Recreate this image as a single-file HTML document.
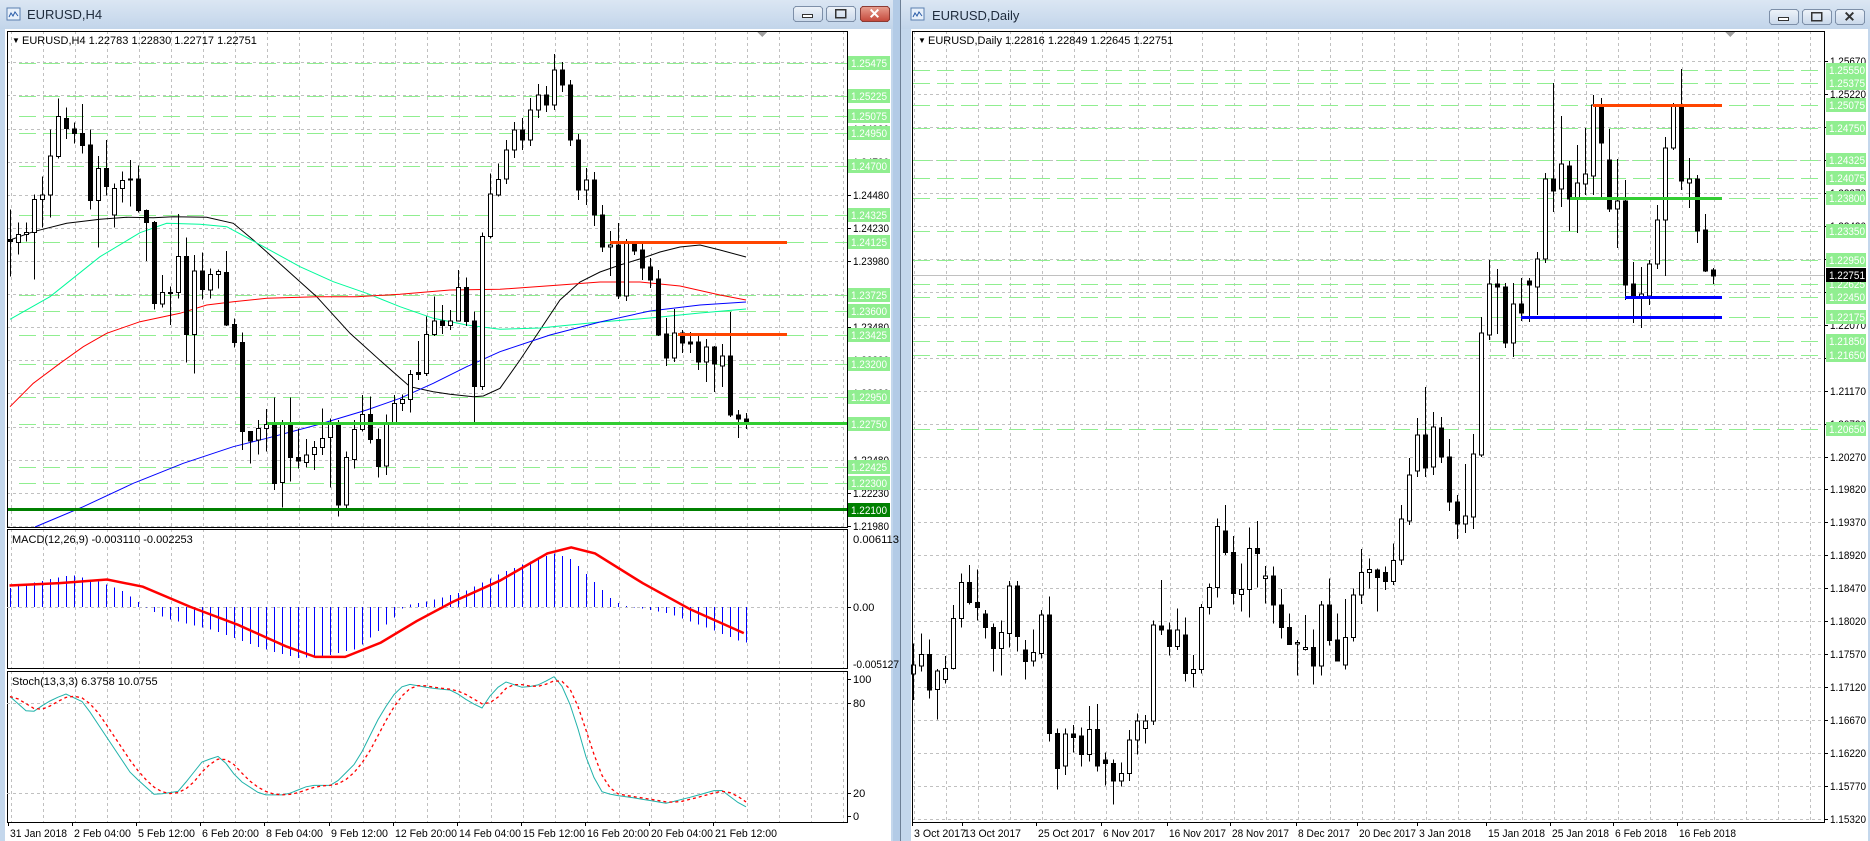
<!DOCTYPE html>
<html><head><meta charset="utf-8">
<style>
html,body{margin:0;padding:0;width:1870px;height:841px;overflow:hidden;background:#b9d1ea;}
svg{display:block;font-family:"Liberation Sans",sans-serif;}
</style></head>
<body>
<svg id="s" xmlns="http://www.w3.org/2000/svg" width="1870" height="841" viewBox="0 0 1870 841" shape-rendering="crispEdges">
<defs>
<linearGradient id="tb" x1="0" y1="0" x2="0" y2="1"><stop offset="0" stop-color="#dbe6f3"/><stop offset="1" stop-color="#c2d5ea"/></linearGradient>
<linearGradient id="bt" x1="0" y1="0" x2="0" y2="1"><stop offset="0" stop-color="#eef3f9"/><stop offset="1" stop-color="#c9d8ea"/></linearGradient>
<linearGradient id="rd" x1="0" y1="0" x2="0" y2="1"><stop offset="0" stop-color="#e8a090"/><stop offset="1" stop-color="#c4473a"/></linearGradient>
</defs>
</svg>
<script>
const NS='http://www.w3.org/2000/svg';const S=document.getElementById('s');
function el(t,a,txt){const e=document.createElementNS(NS,t);for(const k in a)e.setAttribute(k,a[k]);if(txt!=null)e.textContent=txt;S.appendChild(e);return e;}
function interp(pts,x){if(x<=pts[0][0])return pts[0][1];for(let i=1;i<pts.length;i++){if(x<=pts[i][0]){const a=pts[i-1],b=pts[i];return a[1]+(b[1]-a[1])*(x-a[0])/(b[0]-a[0]);}}return pts[pts.length-1][1];}
function poly(pts,col,w,dash){el('polyline',{points:pts.map(p=>p[0].toFixed(1)+','+p[1].toFixed(1)).join(' '),fill:'none',stroke:col,'stroke-width':w,'stroke-dasharray':dash||'none','shape-rendering':'auto'});}
function txt(x,y,t,o){o=o||{};return el('text',Object.assign({x:x,y:y,'font-size':o.fs||11,fill:o.fill||'#000'},o.extra||{}),t);}
function lab(x,y,t,fill){return txt(x,y,t,{fill:fill||'#000',extra:{textLength:t.length>7?46:36,lengthAdjust:'spacingAndGlyphs'}});}
function dt(x,y,t){return txt(x,y,t,{extra:{textLength:Math.round(t.length*5.2),lengthAdjust:'spacingAndGlyphs'}});}

/* ---------- window frames ---------- */
el('rect',{x:0,y:0,width:1870,height:841,fill:'#b9d1ea'});
el('rect',{x:0,y:0,width:893,height:841,fill:'#c4d7ec'});
el('rect',{x:0,y:0,width:893,height:29,fill:'url(#tb)'});
el('rect',{x:5,y:29,width:886,height:812,fill:'#fff'});
el('rect',{x:900,y:0,width:970,height:841,fill:'#c4d7ec'});
el('line',{x1:900.5,y1:0,x2:900.5,y2:841,stroke:'#6d7f95'});
el('rect',{x:901,y:0,width:969,height:29,fill:'url(#tb)'});
el('rect',{x:911,y:29,width:957,height:812,fill:'#fff'});
el('rect',{x:893,y:0,width:7,height:841,fill:'#b3cbe6'});
function icon(x,y){el('rect',{x:x,y:y,width:13,height:12,fill:'#e8f0fa',stroke:'#5a7fb0'});el('polyline',{points:`${x+2},${y+9} ${x+4},${y+5} ${x+6},${y+8} ${x+8},${y+4} ${x+11},${y+8}`,fill:'none',stroke:'#2a5ca8','shape-rendering':'auto'});}
icon(7,8);icon(911,8);
txt(27,19,'EURUSD,H4',{fs:13,fill:'#1e2b3c'});
txt(932,20,'EURUSD,Daily',{fs:13,fill:'#1e2b3c'});
function btn(x,y,w,h,kind,red){el('rect',{x:x+.5,y:y+.5,width:w,height:h,rx:3,fill:red?'url(#rd)':'url(#bt)',stroke:red?'#8c3b34':'#7d8fa8'});
 const cx=x+w/2,cy=y+h/2;
 if(kind==0)el('rect',{x:cx-5,y:cy+1,width:10,height:3,fill:'#fff',stroke:'#333'});
 if(kind==1)el('rect',{x:cx-5,y:cy-4,width:10,height:8,fill:'none',stroke:'#333','stroke-width':1.5});
 if(kind==2)el('text',{x:cx,y:cy+5,'font-size':14,'font-weight':'bold','text-anchor':'middle',fill:red?'#fff':'#333'},'✕');}
btn(793,6,29,15,0);btn(826,6,29,15,1);btn(860,6,29,15,2,true);
btn(1769,9,29,15,0);btn(1802,9,29,15,1);btn(1835,9,29,15,2,false);

/* ---------- LEFT CHART ---------- */
const LX0=7,LX1=847,LY0=31,LY1=527;
const lp=p=>63+(1.25475-p)*13244;
for(let x=11;x<=843;x+=32){[[LY0,LY1],[529,668],[671,822]].forEach(r=>el('line',{x1:x+.5,y1:r[0],x2:x+.5,y2:r[1],stroke:'#c0c0c0','stroke-dasharray':'3,3'}));}
const lgrid=[];for(let p=1.2548;p>1.2196;p-=0.0025){lgrid.push(p);const y=Math.round(lp(p));el('line',{x1:LX0,y1:y+.5,x2:LX1,y2:y+.5,stroke:'#c0c0c0','stroke-dasharray':'3,3'});}
const lgreen=[1.25475,1.25225,1.25075,1.24950,1.24700,1.24325,1.24125,1.23725,1.23600,1.23425,1.23200,1.22950,1.22750,1.22425,1.22300];
lgreen.forEach(p=>{const y=Math.round(lp(p));el('line',{x1:LX0+12,y1:y+.5,x2:LX1,y2:y+.5,stroke:'#90ee90','stroke-dasharray':'17,7'});});
const Z=(a)=>a.map(p=>[p[0]/3,40+p[1]/3]);
const black=Z([[30,600],[100,575],[200,550],[300,538],[380,532],[460,533],[520,530],[620,532],[700,550],[760,600],[850,680],[950,770],[1050,880],[1150,970],[1230,1040],[1300,1055],[1350,1063],[1420,1070],[1450,1068],[1500,1045]]).concat([[520,360],[540,330],[560,300],[580,282],[600,272],[620,265],[643,258],[660,252],[680,247],[700,245],[720,250],[746,257]]);
const cyan=Z([[30,838],[150,770],[300,650],[420,578],[500,550],[600,553],[680,560],[760,603],[900,680],[1000,725],[1100,760],[1200,800],[1300,835],[1400,855],[1500,868]]).concat([[540,328],[600,322],[650,318],[700,313],[746,309]]);
const red=Z([[30,1100],[100,1030],[180,970],[250,920],[320,880],[420,845],[540,820],[620,795],[700,785],[800,775],[950,770],[1070,770],[1200,763],[1350,750],[1500,748]]).concat([[560,285],[600,282],[640,282],[680,286],[720,295],[746,300]]);
const blue=[[35,527]].concat(Z([[250,1400],[400,1330],[550,1270],[700,1220],[800,1195],[950,1155],[1100,1110],[1200,1075],[1300,1030],[1400,980],[1500,935]])).concat([[550,335],[600,322],[650,311],[700,305],[746,302]]);
poly(black,'#000',1);poly(cyan,'#00fa9a',1);poly(red,'#ff0000',1);poly(blue,'#0000ff',1);
function candle(cx,t,b,blk,wt,wb){cx=Math.round(cx);el('line',{x1:cx+.5,y1:wt,x2:cx+.5,y2:wb,stroke:'#000'});
 const h=Math.max(1,b-t);el('rect',{x:cx-1.5,y:t,width:4,height:h,fill:blk?'#000':'#fff',stroke:'#000'});}
const L1=[[30,598,605,1,508,710],[55,583,607,0,548,643],[79,577,583,0,548,605],[103,478,577,0,463,718],[127,465,478,0,410,563],[151,348,465,0,268,533],[175,230,350,0,175,355],[199,235,265,1,203,297],[223,267,280,1,247,310],[247,280,317,1,192,340],[271,315,482,1,268,508],[295,385,482,0,348,622],[319,385,440,1,300,467],[343,445,525,0,430,563],[367,422,445,0,395,488],[391,417,420,1,360,500],[415,417,512,1,377,517],[439,512,547,1,508,663],[463,547,790,1,543,808],[487,757,792,0,705,803],[511,757,760,0,740,855],[535,650,757,0,522,775],[559,650,883,1,592,968],[583,693,883,0,645,1000],[607,693,748,1,637,778],[631,703,750,0,685,775],[655,695,703,0,688,745],[679,697,855,1,633,858],[703,853,907,1,835,922],[727,907,1175,1,877,1230],[751,1175,1203,1,1173,1270],[775,1165,1200,0,1140,1243],[799,1153,1165,0,1107,1235],[823,1155,1330,1,1073,1350],[847,1153,1328,0,1140,1403],[871,1150,1252,1,1072,1325],[895,1252,1263,1,1165,1285],[919,1245,1267,0,1197,1282],[943,1222,1243,0,1203,1290],[967,1195,1222,0,1105,1245],[991,1147,1192,0,1135,1343],[1015,1147,1395,1,1140,1430],[1039,1252,1395,0,1235,1410],[1063,1168,1258,0,1140,1285],[1087,1123,1168,0,1065,1175],[1111,1123,1198,1,1070,1210],[1135,1198,1280,1,1165,1313],[1159,1153,1278,0,1123,1305],[1183,1090,1153,0,1065,1155],[1207,1078,1090,0,1063,1113],[1231,1003,1078,0,990,1118],[1255,998,1003,1,903,1020],[1279,883,1000,0,830,1008],[1303,843,883,0,770,888],[1327,843,857,1,795,882],[1351,843,857,0,810,870],[1375,743,843,0,690,845],[1399,743,845,1,713,858],[1423,843,1040,1,815,1153],[1447,590,1040,0,578,1050],[1471,462,590,0,400,595],[1495,418,465,0,370,470]];
L1.forEach(c=>candle(c[0]/3,40+c[1]/3,40+c[2]/3,c[3],40+c[4]/3,40+c[5]/3));
const L2=[[506,150,179,0,140,184],[514,130,150,0,122,158],[522,130,140,1,118,150],[530,110,140,0,98,146],[538,95,110,0,84,118],[546,95,105,1,86,112],[554,70,105,0,54,110],[562,70,85,1,62,92],[570,85,140,1,80,146],[578,140,190,1,134,200],[586,180,190,0,168,205],[594,180,215,1,172,226],
[602,215,247,1,205,252],[610,245,247,0,231,276],[618,245,296,1,223,299],[626,242,296,0,239,301],[634,242,251,1,241,255],[642,250,268,1,242,280],[650,267,280,1,258,288],[658,279,335,1,270,336],[666,334,358,1,318,366],[674,333,358,0,309,362],[682,333,343,1,330,353],[690,342,344,1,332,353],[698,342,362,1,336,370],[706,347,362,0,339,382],[714,347,364,1,346,392],[722,356,366,0,344,387],[730,356,415,1,312,417],[738,415,419,1,410,438],[746,419,423,1,413,429]];
L2.forEach(c=>candle(c[0],c[1],c[2],c[3],c[4],c[5]));
el('rect',{x:610,y:241,width:177,height:3,fill:'#ff4500'});
el('rect',{x:678,y:333,width:109,height:3,fill:'#ff4500'});
el('rect',{x:267,y:422,width:580,height:3,fill:'#32cd32'});
el('rect',{x:LX0,y:508,width:840,height:3,fill:'#008000'});
[[LY0,LY1],[529,668],[671,822]].forEach(r=>el('rect',{x:LX0+.5,y:r[0]+.5,width:LX1-LX0,height:r[1]-r[0],fill:'none',stroke:'#000'}));
el('polygon',{points:'757,32 767,32 762,37',fill:'#a0a0a0'});
txt(12,43,'▼',{fs:8});
txt(22,44,'EURUSD,H4  1.22783 1.22830 1.22717 1.22751',{fs:11});
lgrid.forEach(p=>{const y=Math.round(lp(p));el('line',{x1:847,y1:y+.5,x2:851,y2:y+.5,stroke:'#000'});lab(853,y+4,p.toFixed(5));});
lgreen.forEach(p=>{const y=Math.round(lp(p));el('rect',{x:848,y:y-7,width:42,height:14,fill:'#90ee90'});lab(851,y+4,p.toFixed(5),'#fff');});
{const y=Math.round(lp(1.221));el('rect',{x:848,y:y-7,width:42,height:14,fill:'#008000'});lab(851,y+4,'1.22100','#fff');}
const zero=607;
el('line',{x1:LX0,y1:zero+.5,x2:LX1,y2:zero+.5,stroke:'#c0c0c0','stroke-dasharray':'3,3'});
const D=a=>a.map(p=>[p[0]*1.19,p[1]*1.19]);
const hist=D([[8,494],[40,487],[60,483],[80,488],[100,495],[115,505],[120,509],[140,520],[180,530],[220,545],[250,553],[270,552],[300,545],[330,520],[340,509],[360,505],[390,497],[420,482],[450,470],[465,465],[480,470],[500,490],[515,505],[525,509],[560,515],[600,530],[625,540]]);
for(let i=0;i<=92;i++){const x=10+8*i;const y=interp(hist,x);el('line',{x1:x+.5,y1:zero,x2:x+.5,y2:y,stroke:'#0000ff'});}
poly(D([[8,492],[50,490],[90,487],[120,493],[160,510],[200,525],[240,543],[265,552],[290,552],[320,540],[350,522],[380,506],[420,488],[460,465],[480,460],[500,465],[540,490],[580,512],[625,532]]),'#ff0000',2.5);
txt(12,543,'MACD(12,26,9) -0.003110 -0.002253');
lab(853,543,'0.006113');el('line',{x1:847,y1:zero+.5,x2:851,y2:zero+.5,stroke:'#000'});txt(853,zero+4,'0.00');lab(853,668,'-0.005127');
[703,793].forEach(y=>el('line',{x1:LX0,y1:y+.5,x2:LX1,y2:y+.5,stroke:'#c0c0c0','stroke-dasharray':'3,3'}));
const st=D([[8,585],[25,600],[40,590],[55,583],[70,590],[90,620],[110,650],[130,668],[150,665],[170,640],[185,635],[200,655],[220,668],[240,668],[260,660],[280,660],[300,640],[320,600],[335,578],[345,575],[360,578],[380,580],[395,590],[405,595],[415,580],[425,573],[440,578],[455,575],[465,568],[475,580],[485,610],[495,645],[505,665],[515,668],[530,670],[560,675],[580,670],[605,663],[625,678]]);
const mp=[],sp=[];for(let i=0;i<=92;i++){const x=10+8*i;mp.push([x,interp(st,x)]);}
for(let i=0;i<mp.length;i++){const a=mp[Math.max(0,i-2)][1],b=mp[Math.max(0,i-1)][1],c=mp[i][1];sp.push([mp[i][0],(a+b+c)/3]);}
poly(mp,'#20b2aa',1);poly(sp,'#ff0000',1.3,'3,3');
txt(12,685,'Stoch(13,3,3) 6.3758 10.0755');
[[100,679],[80,703],[20,793],[0,816]].forEach(a=>{el('line',{x1:847,y1:a[1]+.5,x2:851,y2:a[1]+.5,stroke:'#000'});txt(853,a[1]+4,String(a[0]));});
['31 Jan 2018','2 Feb 04:00','5 Feb 12:00','6 Feb 20:00','8 Feb 04:00','9 Feb 12:00','12 Feb 20:00','14 Feb 04:00','15 Feb 12:00','16 Feb 20:00','20 Feb 04:00','21 Feb 12:00'].forEach((t,i)=>{const x=Math.round(8+64.1*i);el('line',{x1:x+.5,y1:822,x2:x+.5,y2:826,stroke:'#000'});dt(x+2,837,t);});

/* ---------- RIGHT CHART ---------- */
const RX0=912,RX1=1824,RY0=31,RY1=822;
const rp=p=>61+(1.2567-p)*7325;
for(let x=914;x<=1810;x+=32)el('line',{x1:x+.5,y1:RY0,x2:x+.5,y2:RY1,stroke:'#c0c0c0','stroke-dasharray':'3,3'});
const rgrid=[];for(let k=0;k<24;k++){const p=1.2567-0.0045*k;const y=Math.round(61+32.96*k);if(y>RY1)break;rgrid.push([p,y]);el('line',{x1:RX0,y1:y+.5,x2:RX1,y2:y+.5,stroke:'#c0c0c0','stroke-dasharray':'3,3'});}
const rgreen=[1.25550,1.25375,1.25075,1.24750,1.24325,1.24075,1.23800,1.23350,1.22950,1.22625,1.22450,1.22175,1.21850,1.21650,1.20650];
rgreen.forEach(p=>{const y=Math.round(rp(p));el('line',{x1:RX0+1,y1:y+.5,x2:RX1,y2:y+.5,stroke:'#90ee90','stroke-dasharray':'17,7'});});
el('line',{x1:RX0,y1:275.5,x2:RX1,y2:275.5,stroke:'#c0c0c0'});
const R1=[[40,1095,1122,0,1030,1200],[64,1063,1098,0,1000,1115],[88,1063,1170,1,1018,1195],[112,1113,1168,0,1107,1258],[136,1105,1138,0,1068,1150],[160,955,1105,0,915,1108],[184,847,955,0,820,983],[208,847,908,1,795,913],[232,907,922,1,808,962],[256,942,982,1,930,1015],[280,982,1045,1,970,1115],[304,997,1045,0,962,1127],[328,858,1000,0,843,1043],[352,858,1010,1,843,1055],[376,1050,1085,1,1020,1138],[400,1057,1083,0,988,1100],[424,945,1060,0,930,1075],[448,945,1300,1,890,1325],[472,1300,1405,1,1285,1468],[496,1302,1398,0,1285,1425],[520,1302,1312,1,1275,1358],[544,1308,1363,1,1283,1400],[568,1288,1363,0,1218,1385],[592,1288,1398,1,1212,1415],[616,1380,1390,1,1358,1457],[640,1390,1443,1,1378,1513],[664,1420,1443,0,1387,1460],[688,1320,1420,0,1290,1443],[712,1263,1320,0,1240,1363],[736,1263,1285,0,1245,1330],[760,975,1263,0,962,1275],[784,978,990,1,840,1005],[808,990,1040,1,968,1067],[832,990,1040,0,925,1050],[856,1005,1120,1,952,1145],[880,1108,1120,0,1065,1162],[904,922,1108,0,912,1120],[928,862,922,0,850,943],[952,680,862,0,655,893],[976,693,757,1,615,765],[1000,757,880,1,708,913],[1024,868,883,0,790,935],[1048,745,868,0,682,952],[1072,745,760,1,663,862],[1096,828,835,0,798,910],[1120,828,915,1,800,970],[1144,915,982,1,867,1015],[1168,982,1033,1,940,1033],[1192,1027,1032,0,1020,1127],[1216,1042,1048,0,945,1052],[1240,1042,1098,1,988,1153],[1264,915,1098,0,903,1127],[1288,915,1022,1,835,1037],[1312,1020,1083,1,940,1085],[1336,1012,1095,0,897,1108],[1360,885,1012,0,865,1025],[1384,817,885,0,747,912],[1408,808,817,0,775,865],[1432,810,832,1,805,935],[1456,817,845,1,800,870],[1480,782,845,0,730,855]];
R1.forEach(c=>candle(900+c[0]/3,300+c[1]/3,300+c[2]/3,c[3],300+c[4]/3,300+c[5]/3));
const R2=[[1401,519,560,0,505,565],[1409,475,521,0,458,525],[1417,435,471,0,418,477],[1425,435,468,1,387,477],[1433,427,467,0,412,475],[1441,428,457,1,417,463],[1449,457,502,1,439,511],[1457,502,524,1,495,539],[1465,516,524,0,464,533],[1473,454,517,0,434,529],[1481,333,455,0,317,457],[1489,284,335,0,260,340],[1497,284,287,1,269,334],[1505,287,343,1,283,348],[1513,304,343,0,283,357],[1521,304,313,1,278,321],[1529,281,285,1,278,322],[1537,259,287,0,252,315],[1545,179,259,0,173,263],[1553,179,191,1,83,212],[1561,164,189,0,116,207],[1569,166,199,1,161,231],[1577,183,199,0,145,233],[1585,174,184,0,128,195],[1593,105,176,0,95,195],[1601,105,143,1,98,198],[1609,160,209,1,129,212],[1617,201,209,0,159,248],[1625,201,285,1,180,300],[1633,284,297,1,262,323],[1641,294,297,0,267,328],[1649,264,296,0,260,305],[1657,220,264,0,205,269],[1665,148,220,0,137,276],[1673,106,148,0,103,150],[1681,107,181,1,69,190],[1689,179,183,0,158,208],[1697,179,231,1,175,243],[1705,230,271,1,214,272],[1713,270,276,1,268,284]];
R2.forEach(c=>candle(c[0],c[1],c[2],c[3],c[4],c[5]));
el('rect',{x:1593,y:104,width:129,height:3,fill:'#ff4500'});
el('rect',{x:1570,y:197,width:152,height:3,fill:'#32cd32'});
el('rect',{x:1625,y:296,width:97,height:3,fill:'#0000ff'});
el('rect',{x:1521,y:316,width:201,height:3,fill:'#0000ff'});
el('rect',{x:RX0+.5,y:RY0+.5,width:RX1-RX0,height:RY1-RY0,fill:'none',stroke:'#000'});
el('polygon',{points:'1725,32 1735,32 1730,37',fill:'#a0a0a0'});
txt(918,43,'▼',{fs:8});
txt(928,44,'EURUSD,Daily  1.22816 1.22849 1.22645 1.22751',{fs:11});
rgrid.forEach(a=>{el('line',{x1:RX1,y1:a[1]+.5,x2:RX1+4,y2:a[1]+.5,stroke:'#000'});lab(1830,a[1]+4,a[0].toFixed(5));});
rgreen.forEach(p=>{const y=Math.round(rp(p));el('rect',{x:1826,y:y-7,width:40,height:14,fill:'#90ee90'});lab(1829,y+4,p.toFixed(5),'#fff');});
el('rect',{x:1826,y:268,width:40,height:14,fill:'#000'});lab(1829,279,'1.22751','#fff');
[['3 Oct 2017',912],['13 Oct 2017',962],['25 Oct 2017',1036],['6 Nov 2017',1101],['16 Nov 2017',1167],['28 Nov 2017',1230],['8 Dec 2017',1296],['20 Dec 2017',1357],['3 Jan 2018',1417],['15 Jan 2018',1486],['25 Jan 2018',1550],['6 Feb 2018',1613],['16 Feb 2018',1677]].forEach(a=>{el('line',{x1:a[1]+.5,y1:822,x2:a[1]+.5,y2:826,stroke:'#000'});dt(a[1]+2,837,a[0]);});
</script>
</body></html>
